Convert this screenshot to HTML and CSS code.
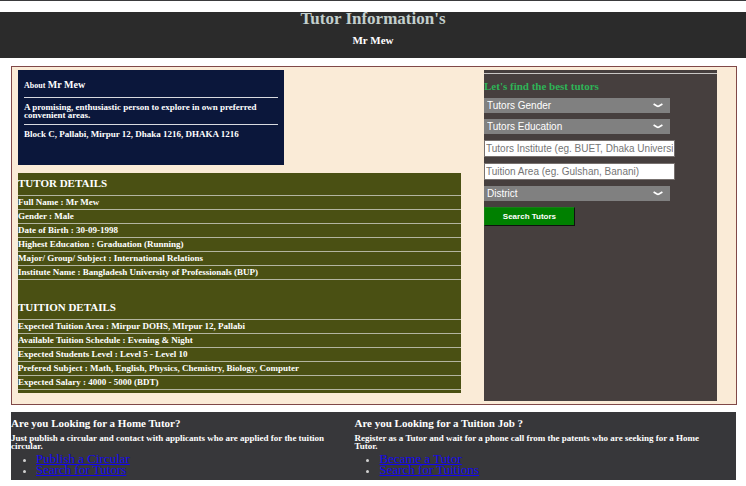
FILE: index.html
```html
<!DOCTYPE html>
<html lang="en">
<head>
<meta charset="utf-8">
<title>Tutor Information's</title>
<link rel="stylesheet" href="styles.css">
</head>
<body>
<header class="banner">
  <h1>Tutor Information's</h1>
  <p>Mr Mew</p>
</header>
<main class="profile">
  <div class="info">
    <section class="about">
      <h2><small>About</small> Mr Mew</h2>
      <p>A promising, enthusiastic person to explore in own preferred convenient areas.</p>
      <p>Block C, Pallabi, Mirpur 12, Dhaka 1216, DHAKA 1216</p>
    </section>
    <section class="details">
      <h2>TUTOR DETAILS</h2>
      <ul>
        <li>Full Name : Mr Mew</li>
        <li>Gender : Male</li>
        <li>Date of Birth : 30-09-1998</li>
        <li>Highest Education : Graduation (Running)</li>
        <li>Major/ Group/ Subject : International Relations</li>
        <li>Institute Name : Bangladesh University of Professionals (BUP)</li>
      </ul>
      <h2 class="second">TUITION DETAILS</h2>
      <ul>
        <li>Expected Tuition Area : Mirpur DOHS, MIrpur 12, Pallabi</li>
        <li>Available Tuition Schedule : Evening &amp; Night</li>
        <li>Expected Students Level : Level 5 - Level 10</li>
        <li>Prefered Subject : Math, English, Physics, Chemistry, Biology, Computer</li>
        <li>Expected Salary : 4000 - 5000 (BDT)</li>
      </ul>
    </section>
  </div>
  <aside class="search">
    <h2>Let's find the best tutors</h2>
    <form>
      <div class="pick">
        <select aria-label="Tutors Gender"><option>Tutors Gender</option></select>
        <svg viewBox="0 0 10 5" aria-hidden="true"><path d="M.6 1L4 3Q5 3.6 6 3L9.4 1"/></svg>
      </div>
      <div class="pick">
        <select aria-label="Tutors Education"><option>Tutors Education</option></select>
        <svg viewBox="0 0 10 5" aria-hidden="true"><path d="M.6 1L4 3Q5 3.6 6 3L9.4 1"/></svg>
      </div>
      <input type="text" aria-label="Tutors Institute" placeholder="Tutors Institute (eg. BUET, Dhaka University)">
      <input type="text" aria-label="Tuition Area" placeholder="Tuition Area (eg. Gulshan, Banani)">
      <div class="pick">
        <select aria-label="District"><option>District</option></select>
        <svg viewBox="0 0 10 5" aria-hidden="true"><path d="M.6 1L4 3Q5 3.6 6 3L9.4 1"/></svg>
      </div>
      <button type="button">Search Tutors</button>
    </form>
  </aside>
</main>
<footer class="footer">
  <section>
    <h2>Are you Looking for a Home Tutor?</h2>
    <p>Just publish a circular and contact with applicants who are applied for the tuition circular.</p>
    <ul>
      <li><a href="#">Publish a Circular</a></li>
      <li><a href="#">Search for Tutors</a></li>
    </ul>
  </section>
  <section>
    <h2>Are you Looking for a Tuition Job ?</h2>
    <p>Register as a Tutor and wait for a phone call from the patents who are seeking for a Home Tutor.</p>
    <ul>
      <li><a href="#">Became a Tutor</a></li>
      <li><a href="#">Search for Tuitions</a></li>
    </ul>
  </section>
</footer>
</body>
</html>
```
FILE: styles.css
```css
* {
  box-sizing: border-box;
}

body {
  margin: 0;
  border-top: 1px solid #3a3a3c;
  background: #fff;
  color: #fff;
  font: bold 9px/8px "Liberation Serif", serif;
}

h1, h2, p, ul {
  margin: 0;
  padding: 0;
}

.banner {
  margin-top: 11px;
  padding-bottom: 12px;
  background: #2b2b2b;
  text-align: center;
}

.banner h1 {
  color: #c3cfcd;
  font-size: 17px;
  line-height: 14px;
}

.banner p {
  padding-top: 8px;
  font-size: 11px;
  line-height: 12px;
}

.profile {
  display: grid;
  grid-template-columns: 443fr 233fr;
  gap: 23px;
  margin: 8px 9px 0 11px;
  padding: 3px 19px 3px 6px;
  border: 1px solid #804848;
  background: #faebd7;
}

.info {
  padding-bottom: 8px;
}

.about {
  width: 60%;
  margin-bottom: 8px;
  padding: 10px 6px 22px;
  background: #0b173b;
}

.about h2 {
  padding-bottom: 6px;
  font-size: 10px;
  line-height: 10px;
}

.about small {
  font-size: 8px;
}

.about p {
  padding: 5px 0;
  border-top: 1px solid #d8dae0;
}

.details {
  padding-bottom: 3px;
  background: #4a5013;
}

.details h2 {
  padding: 4px 0 6px;
  border-bottom: 1px solid #b3b5a0;
  font-size: 11px;
  line-height: 12px;
}

.details .second {
  padding-top: 21px;
}

.details ul {
  list-style: none;
}

.details li {
  border-bottom: 1px solid #b3b5a0;
  line-height: 13px;
}

.search {
  padding-top: 3px;
  background: #463f3e;
}

.search h2 {
  padding: 7px 0;
  border-top: 1px solid #c8c6c4;
  color: #2eb457;
  font-size: 11px;
  line-height: 10px;
}

.search form {
  display: flex;
  flex-direction: column;
  align-items: flex-start;
  gap: 6px;
}

.pick {
  position: relative;
  width: 80%;
  height: 15px;
}

.pick select {
  display: block;
  width: 100%;
  height: 15px;
  padding: 0 3px;
  border: 0;
  border-radius: 0;
  appearance: none;
  background: #808080;
  color: #fff;
  font: 10px/15px "Liberation Sans", sans-serif;
}

.pick svg {
  position: absolute;
  top: 5px;
  right: 7px;
  width: 10px;
  height: 5px;
  fill: none;
  stroke: #fff;
  stroke-width: 1.7;
}

.search input {
  width: 82%;
  height: 17px;
  padding: 0 1px;
  border: 1px solid #77716f;
  background: #fff;
  font: 10px/15px "Liberation Sans", sans-serif;
}

.search input::placeholder {
  color: #757575;
}

.search button {
  width: 39%;
  height: 19px;
  padding: 0;
  border: 1px solid;
  border-color: #168016 #101010 #101010 #168016;
  background: #008000;
  color: #fff;
  font: bold 8px/16px "Liberation Sans", sans-serif;
}

.footer {
  display: grid;
  grid-template-columns: 343fr 381fr;
  margin: 7px 10px 0 11px;
  padding: 4px 0 5px;
  background: #37373a;
}

.footer section {
  padding-right: 16px;
}

.footer h2 {
  font-size: 11px;
  line-height: 14px;
}

.footer p {
  padding: 4px 0 3px;
  line-height: 8px;
}

.footer ul {
  padding-left: 25px;
  font-size: 13px;
  font-weight: normal;
  line-height: 11px;
}

.footer li::marker {
  color: #d0d0d0;
  font-size: 11px;
}

.footer a {
  color: #1406ef;
}
```
